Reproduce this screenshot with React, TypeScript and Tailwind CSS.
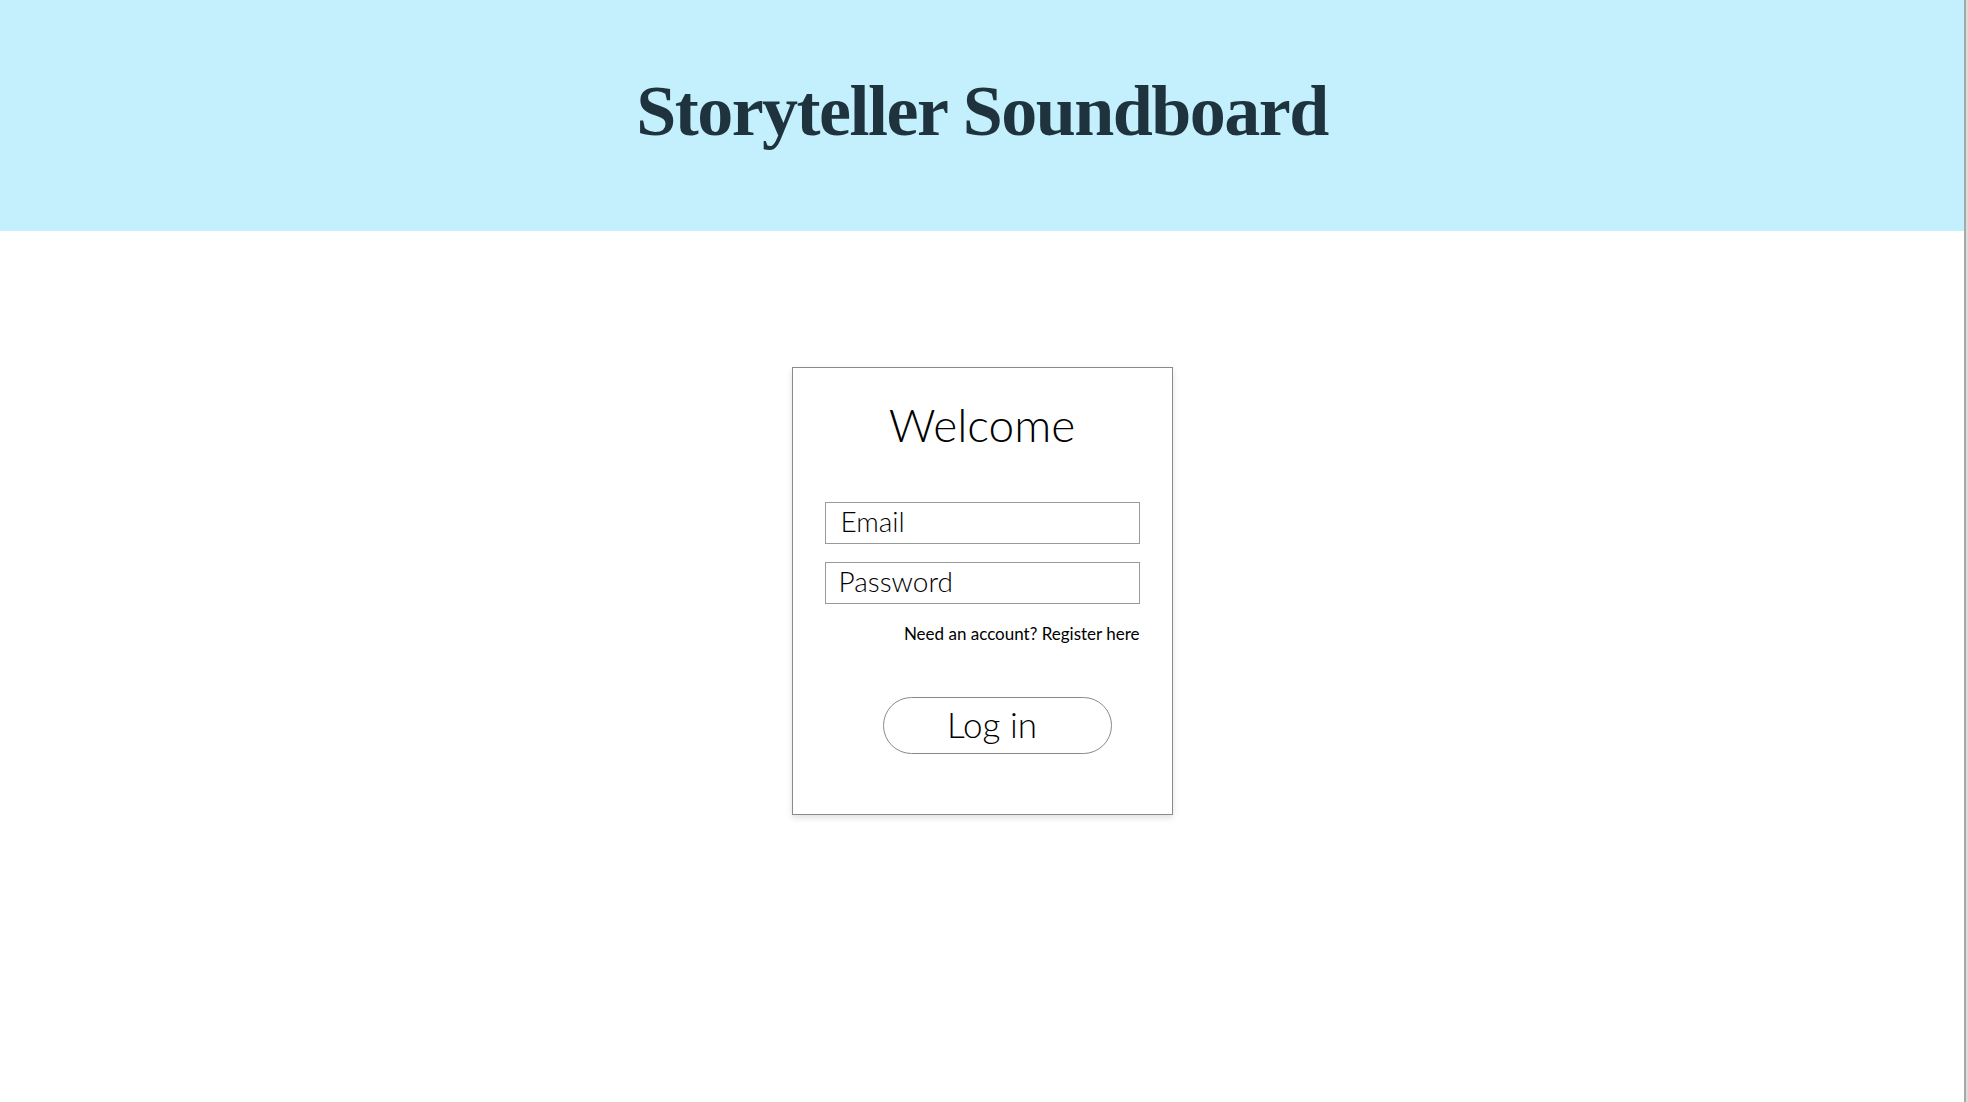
import React from "react";

export default function App() {
  const body = { fontFamily: "Lato, 'Open Sans', sans-serif" };
  return (
    <div className="flex h-[1102px] w-full bg-white">
      <div className="flex flex-1 flex-col">
        <header className="flex h-[231px] w-full items-start justify-center bg-[#c4effd]">
          <h1
            className="mt-[75px] text-[72px] font-bold leading-[72px] tracking-[-1.5px] text-[#1e333d]"
            style={{ fontFamily: "'Liberation Serif', 'Times New Roman', serif" }}
          >
            Storyteller Soundboard
          </h1>
        </header>
        <main className="flex justify-center pt-[136px]">
          <div
            className="flex h-[448px] w-[381px] flex-col border border-[#8a8a8a] bg-white px-[32px] pt-[33px] shadow-[0_3px_6px_rgba(0,0,0,0.12)]"
            style={body}
          >
            <h2 className="text-center text-[46px] font-light leading-[48px] text-black">Welcome</h2>
            <input
              type="text"
              placeholder="Email"
              className="mt-[53px] h-[42px] w-full border border-[#9a9a9a] bg-white pb-[4px] pl-[15px] text-[28px] font-light text-black outline-none placeholder:text-black"
            />
            <input
              type="password"
              placeholder="Password"
              className="mt-[18px] h-[42px] w-full border border-[#9a9a9a] bg-white pb-[4px] pl-[13px] text-[28px] font-light text-black outline-none placeholder:text-black"
            />
            <div className="mt-[18px] text-right text-[17px] font-normal leading-[24px] text-black">
              Need an account? Register here
            </div>
            <button className="ml-[58px] mt-[51px] flex h-[57px] w-[229px] items-center justify-center rounded-full border border-[#8a8a8a] bg-white pb-[4px] pr-[10px] text-[35px] font-light leading-[40px] text-black">
              Log in
            </button>
          </div>
        </main>
      </div>
      <div className="h-full w-[4px] border-l-2 border-[#a8a8a8] bg-[#dcdcdc]" />
    </div>
  );
}
